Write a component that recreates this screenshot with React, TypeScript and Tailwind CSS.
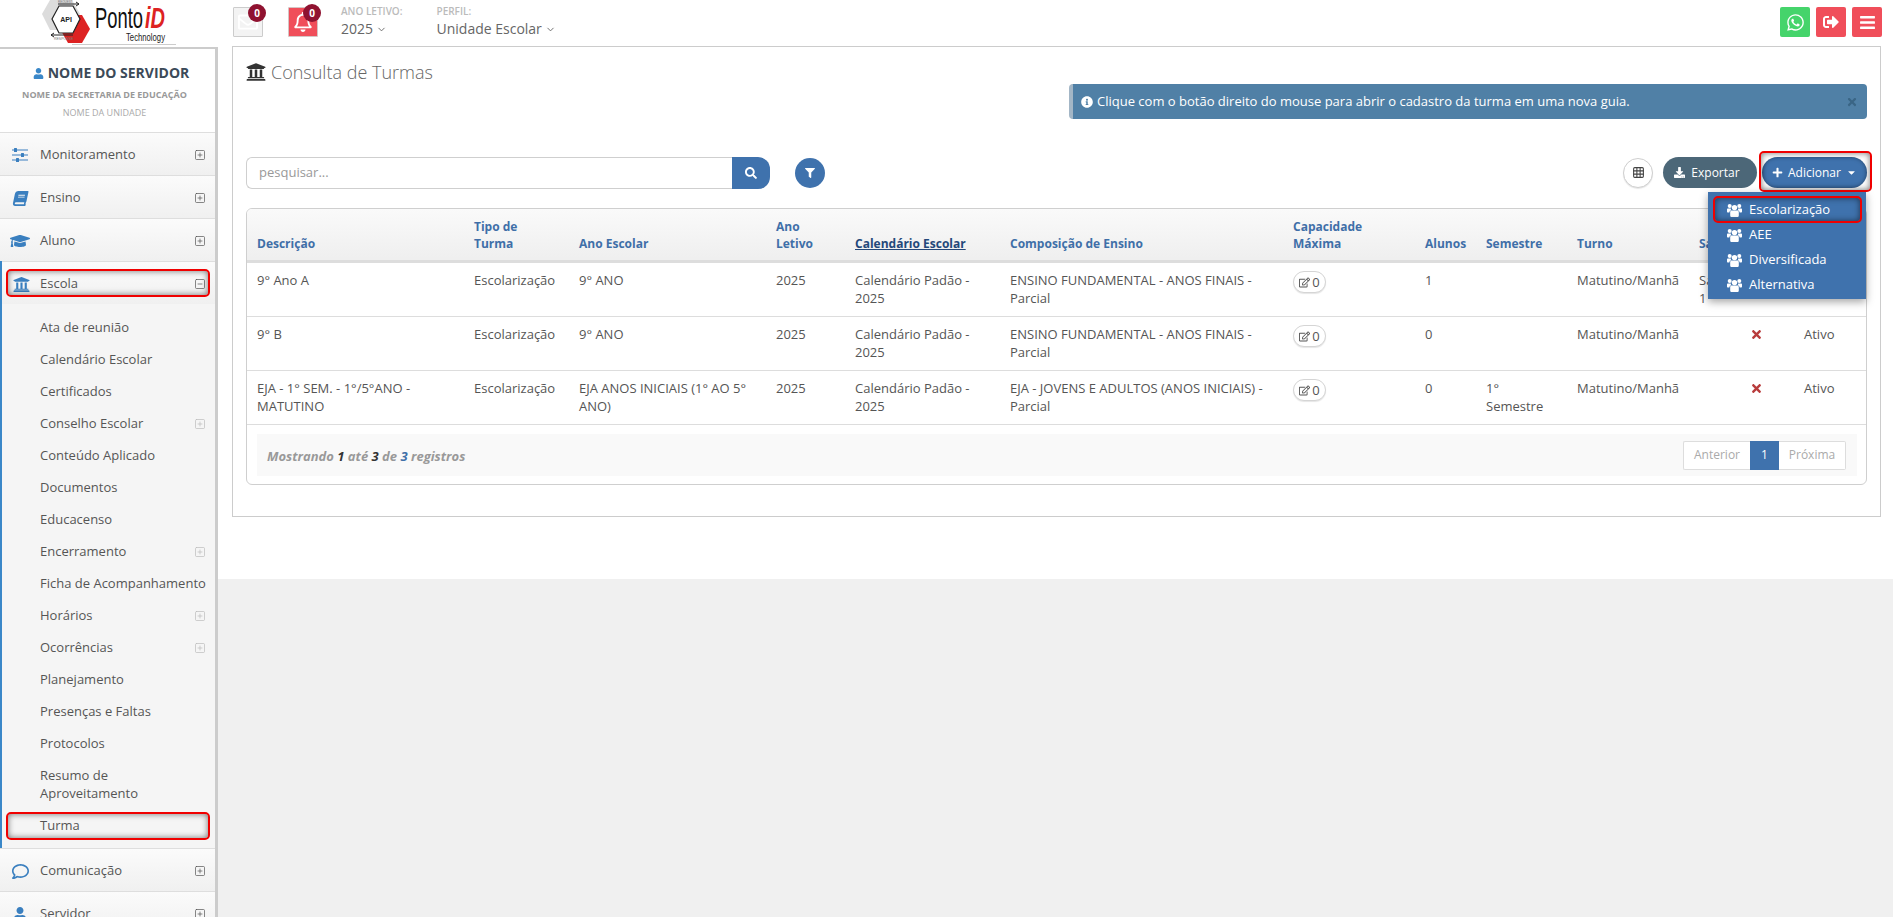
import React from "react";
import {
  FaBars, FaBook, FaCaretDown, FaDownload, FaFilter, FaGraduationCap, FaInfoCircle, FaPlus, FaRegBell,
  FaRegComment, FaRegEdit, FaRegEnvelope, FaSearch, FaSignOutAlt, FaTimes,
  FaUniversity, FaUser, FaWhatsapp,
} from "react-icons/fa";
import { ChevronDown, Grid3x3, SquareMinus, SquarePlus } from "lucide-react";

const font = { fontFamily: '"Open Sans", sans-serif' };

function Logo() {
  return (
    <svg width="218" height="47" viewBox="0 0 218 47" className="block">
      <polygon points="42,14 50,0 72,0 80,14 72,30 50,30" fill="#dcdcdc" />
      <polygon points="60,29 68,15 82,15 90,29 82,43 68,43" fill="#dd2222" />
      <polygon points="52,19 59,6 73,6 80,19 73,33 59,33" fill="#fff" stroke="#222" strokeWidth="1.2" />
      <text x="66" y="22" textAnchor="middle" fontFamily="Liberation Sans" fontWeight="700" fontSize="7" fill="#222">API</text>
      <path d="M58 4h21M76 2l3 2-3 2M73 35H51M54 33l-3 2 3 2" stroke="#222" strokeWidth="1" fill="none" />
      <text x="58" y="2.5" fontFamily="Liberation Sans" fontSize="3" fill="#777">REQUEST</text>
      <text x="54" y="40" fontFamily="Liberation Sans" fontSize="3.5" fill="#777">RESPONSE</text>
      <text x="95" y="28" fontFamily="Liberation Sans" fontSize="29" textLength="48" lengthAdjust="spacingAndGlyphs" fill="#111">Ponto</text>
      <text x="145" y="28" fontFamily="Liberation Sans" fontStyle="italic" fontWeight="700" fontSize="29" textLength="20" lengthAdjust="spacingAndGlyphs" fill="#dd2222">iD</text>
      <text x="126" y="41" fontFamily="Liberation Sans" fontSize="10" textLength="39" lengthAdjust="spacingAndGlyphs" fill="#222">Technology</text>
      <line x1="72" y1="44.5" x2="176" y2="44.5" stroke="#ccc" />
    </svg>
  );
}

function SlidersIcon() {
  return (
    <svg width="16" height="14" viewBox="0 0 16 14" fill="currentColor">
      <rect x="0" y="1.5" width="16" height="1" />
      <rect x="0" y="6.5" width="16" height="1" />
      <rect x="0" y="11.5" width="16" height="1" />
      <rect x="2" y="0" width="3" height="4" rx="0.5" />
      <rect x="9" y="5" width="3" height="4" rx="0.5" />
      <rect x="4" y="10" width="3" height="4" rx="0.5" />
    </svg>
  );
}

function UsersIcon() {
  return (
    <svg width="15" height="14" viewBox="0 0 15 14" fill="currentColor" className="shrink-0">
      <circle cx="7.5" cy="4.6" r="2.7" />
      <path d="M3.2 9c0-1 .7-1.6 1.6-1.6h5.4c.9 0 1.6.6 1.6 1.6v3.4c0 .9-.7 1.6-1.6 1.6H4.8c-.9 0-1.6-.7-1.6-1.6z" />
      <circle cx="2.7" cy="3" r="2" />
      <circle cx="12.3" cy="3" r="2" />
      <path d="M0 6.6c0-.6.4-1 1-1h2.8c-.1.8.2 1.3.6 1.6C3.3 7.4 2.4 8 2.3 9.6H1c-.6 0-1-.4-1-1z" />
      <path d="M15 6.6c0-.6-.4-1-1-1h-2.8c.1.8-.2 1.3-.6 1.6 1.1.2 2 .8 2.1 2.4H14c.6 0 1-.4 1-1z" />
    </svg>
  );
}

function Badge() {
  return (
    <span className="absolute -right-[4px] -top-[4px] flex h-[18px] w-[18px] items-center justify-center rounded-full bg-[#8f1230] text-[10px] font-bold text-white">
      0
    </span>
  );
}

function Header() {
  return (
    <header className="flex h-[47px] shrink-0 items-start bg-white">
      <div className="w-[218px] shrink-0">
        <Logo />
      </div>
      <div className="ml-[15px] mt-[7px] flex">
        <div className="relative flex h-[30px] w-[30px] items-center justify-center rounded-[1px] border border-[#cccccc] bg-[#f3f3f3] text-white">
          <FaRegEnvelope size={20} />
          <Badge />
        </div>
        <div className="relative ml-[25px] flex h-[30px] w-[30px] items-center justify-center rounded-[1px] border border-[#d5c5c5] bg-[#f04e5a] text-white">
          <FaRegBell size={20} />
          <Badge />
        </div>
      </div>
      <div className="ml-[23px] mt-[4px]">
        <div className="text-[10px] font-semibold leading-[14px] text-[#bbb]">ANO LETIVO:</div>
        <div className="mt-px flex items-center gap-[3px] text-[14px] leading-[20px] text-[#666]">
          2025 <ChevronDown size={11} />
        </div>
      </div>
      <div className="ml-[34px] mt-[4px]">
        <div className="text-[10px] font-semibold leading-[14px] text-[#bbb]">PERFIL:</div>
        <div className="mt-px flex items-center gap-[3px] text-[14px] leading-[20px] text-[#666]">
          Unidade Escolar <ChevronDown size={11} />
        </div>
      </div>
      <div className="ml-auto mr-[11px] mt-[7px] flex gap-[6px] text-white">
        <div className="flex h-[30px] w-[30px] items-center justify-center rounded-[2px] bg-[#45d46b]">
          <FaWhatsapp size={19} />
        </div>
        <div className="flex h-[30px] w-[30px] items-center justify-center rounded-[2px] bg-[#f04e5a]">
          <FaSignOutAlt size={16} />
        </div>
        <div className="flex h-[30px] w-[30px] items-center justify-center rounded-[2px] bg-[#f04e5a]">
          <FaBars size={17} />
        </div>
      </div>
    </header>
  );
}

function Highlight({ className }: { className: string }) {
  return (
    <div className={`pointer-events-none absolute rounded-[5px] border-2 border-[#f00000] shadow-[inset_0_0_6px_rgba(0,0,0,0.55)] ${className}`} />
  );
}

function MenuItem({ icon, label }: { icon: React.ReactNode; label: string }) {
  return (
    <div className="relative flex h-[43px] items-center border-t border-[#dedede] bg-gradient-to-b from-[#fbfbfb] to-[#f0f0f0] pt-[2px] text-[13px] text-[#555]">
      <span className="flex w-[40px] shrink-0 justify-center text-[#3a7fbf]">{icon}</span>
      <span className="flex-1">{label}</span>
      <span className="mr-[9px]">
        <SquarePlus size={12} strokeWidth={1.4} />
      </span>
    </div>
  );
}

const subItems: { label: string; more?: boolean }[] = [
  { label: "Ata de reunião" },
  { label: "Calendário Escolar" },
  { label: "Certificados" },
  { label: "Conselho Escolar", more: true },
  { label: "Conteúdo Aplicado" },
  { label: "Documentos" },
  { label: "Educacenso" },
  { label: "Encerramento", more: true },
  { label: "Ficha de Acompanhamento" },
  { label: "Horários", more: true },
  { label: "Ocorrências", more: true },
  { label: "Planejamento" },
  { label: "Presenças e Faltas" },
  { label: "Protocolos" },
];

function Sidebar() {
  return (
    <aside className="w-[218px] shrink-0 border-r-[3px] border-t-2 border-[#cccccc] bg-[#f5f5f5]">
      <div className="h-[83px] bg-white pr-[6px] pt-[14px] text-center">
        <div className="flex items-center justify-center gap-[4px] pl-[13px] text-[14px] font-bold leading-[20px] text-[#3c4a58]">
          <FaUser size={11} className="text-[#3a87c8]" />
          NOME DO SERVIDOR
        </div>
        <div className="mt-[5px] text-[9px] font-bold leading-[14px] text-[#999]">NOME DA SECRETARIA DE EDUCAÇÃO</div>
        <div className="mt-[4px] text-[9px] leading-[14px] text-[#aaa]">NOME DA UNIDADE</div>
      </div>
      <MenuItem icon={<SlidersIcon />} label="Monitoramento" />
      <MenuItem icon={<FaBook size={15} className="-skew-x-12" />} label="Ensino" />
      <MenuItem icon={<FaGraduationCap size={20} />} label="Aluno" />
      <div className="border-l-2 border-[#3a87c8]">
        <div className="relative flex h-[43px] items-center border-t border-[#dedede] bg-gradient-to-b from-[#fbfbfb] to-[#f0f0f0] pt-[2px] text-[13px] text-[#555]">
          <span className="flex w-[38px] shrink-0 justify-center text-[#3a7fbf]">
            <FaUniversity size={17} />
          </span>
          <span className="flex-1">Escola</span>
          <span className="mr-[9px]">
            <SquareMinus size={12} strokeWidth={1.4} />
          </span>
          <Highlight className="left-[4px] right-[5px] top-[7px] h-[28px]" />
        </div>
        <div className="pb-[8px] pt-[8px] text-[13px] text-[#555]">
          {subItems.map((item) => (
            <div key={item.label} className="flex h-[32px] items-center pl-[38px] pr-[9px]">
              <span className="flex-1 whitespace-nowrap">{item.label}</span>
              {item.more && <SquarePlus size={12} strokeWidth={1.4} className="text-[#bbb]" />}
            </div>
          ))}
          <div className="pb-[10px] pl-[38px] pr-[9px] pt-[6px] leading-[18px]">Resumo de<br />Aproveitamento</div>
          <div className="relative flex h-[28px] items-center pl-[38px]">
            Turma
            <Highlight className="left-[4px] right-[5px] top-0 h-[28px]" />
          </div>
        </div>
      </div>
      <MenuItem icon={<FaRegComment size={17} />} label="Comunicação" />
      <MenuItem icon={<FaUser size={14} />} label="Servidor" />
    </aside>
  );
}

interface Row {
  desc: string[];
  ano: string[];
  comp: string[];
  alunos: string;
  semestre: string[];
  sala: string[];
}

const rows: Row[] = [
  { desc: ["9° Ano A"], ano: ["9° ANO"], comp: ["ENSINO FUNDAMENTAL - ANOS FINAIS -", "Parcial"], alunos: "1", semestre: [], sala: ["Sala", "1"] },
  { desc: ["9° B"], ano: ["9° ANO"], comp: ["ENSINO FUNDAMENTAL - ANOS FINAIS -", "Parcial"], alunos: "0", semestre: [], sala: [] },
  { desc: ["EJA - 1° SEM. - 1°/5°ANO -", "MATUTINO"], ano: ["EJA ANOS INICIAIS (1° AO 5°", "ANO)"], comp: ["EJA - JOVENS E ADULTOS (ANOS INICIAIS) -", "Parcial"], alunos: "0", semestre: ["1°", "Semestre"], sala: [] },
];

function Lines({ lines }: { lines: string[] }) {
  return (
    <>
      {lines.map((l) => (
        <div key={l} className="whitespace-nowrap">{l}</div>
      ))}
    </>
  );
}

function Th({ lines, underline }: { lines: string[]; underline?: boolean }) {
  return (
    <th className={`border-b-[3px] border-[#dddddd] px-[10px] pb-[8px] align-bottom text-left text-[12px] font-bold leading-[17px] ${underline ? "text-[#24487a] underline" : "text-[#3f6fa8]"}`}>
      <Lines lines={lines} />
    </th>
  );
}

function TurmasTable() {
  const td = "h-[54px] border-b border-[#dddddd] px-[10px] pt-[8px] align-top";
  return (
    <div className="overflow-hidden rounded-[6px] border border-[#cfcfcf] bg-white">
      <table className="w-full table-fixed border-separate border-spacing-0 text-[13px] leading-[18px] text-[#555]">
        <colgroup>
          <col className="w-[217px]" />
          <col className="w-[105px]" />
          <col className="w-[197px]" />
          <col className="w-[79px]" />
          <col className="w-[155px]" />
          <col className="w-[283px]" />
          <col className="w-[132px]" />
          <col className="w-[61px]" />
          <col className="w-[91px]" />
          <col className="w-[122px]" />
          <col className="w-[53px]" />
          <col className="w-[52px]" />
          <col />
        </colgroup>
        <thead>
          <tr className="h-[54px] bg-gradient-to-b from-[#fafafa] to-[#eeeeee]">
            <Th lines={["Descrição"]} />
            <Th lines={["Tipo de", "Turma"]} />
            <Th lines={["Ano Escolar"]} />
            <Th lines={["Ano", "Letivo"]} />
            <Th lines={["Calendário Escolar"]} underline />
            <Th lines={["Composição de Ensino"]} />
            <Th lines={["Capacidade", "Máxima"]} />
            <Th lines={["Alunos"]} />
            <Th lines={["Semestre"]} />
            <Th lines={["Turno"]} />
            <Th lines={["Sala"]} />
            <Th lines={[""]} />
            <Th lines={["Status"]} />
          </tr>
        </thead>
        <tbody>
          {rows.map((r) => (
            <tr key={r.desc[0]}>
              <td className={td}><Lines lines={r.desc} /></td>
              <td className={td}>Escolarização</td>
              <td className={td}><Lines lines={r.ano} /></td>
              <td className={td}>2025</td>
              <td className={td}><Lines lines={["Calendário Padão -", "2025"]} /></td>
              <td className={td}><Lines lines={r.comp} /></td>
              <td className={td}>
                <span className="inline-flex h-[22px] w-[33px] items-center justify-center gap-[2px] rounded-full border border-[#d5d5d5] bg-white shadow-[0_1px_1px_rgba(0,0,0,0.1)]">
                  <FaRegEdit size={11} />
                  0
                </span>
              </td>
              <td className={td}>{r.alunos}</td>
              <td className={td}><Lines lines={r.semestre} /></td>
              <td className={td}>Matutino/Manhã</td>
              <td className={td}><Lines lines={r.sala} /></td>
              <td className={td}>
                <span className="-ml-[2px] flex h-[18px] items-center text-[#b83c3c]"><FaTimes size={13} /></span>
              </td>
              <td className={td}>Ativo</td>
            </tr>
          ))}
        </tbody>
      </table>
      <div className="mb-[8px] ml-[10px] mr-[9px] mt-[9px] flex h-[42px] items-center justify-between bg-[#f9f9f9] pl-[10px] pr-[11px]">
        <div className="pt-[4px] text-[13px] font-bold italic text-[#999]">
          Mostrando <span className="text-[#333]">1</span> até <span className="text-[#333]">3</span> de <span className="text-[#3f6fa8]">3</span> registros
        </div>
        <div className="flex h-[29px] text-[12px] text-[#aaa]">
          <span className="flex w-[67px] items-center justify-center rounded-l-[2px] border border-r-0 border-[#dddddd] bg-white">Anterior</span>
          <span className="flex w-[29px] items-center justify-center bg-[#3f72ad] text-white">1</span>
          <span className="flex w-[67px] items-center justify-center rounded-r-[2px] border border-l-0 border-[#dddddd] bg-white">Próxima</span>
        </div>
      </div>
    </div>
  );
}

const menuOptions = ["Escolarização", "AEE", "Diversificada", "Alternativa"];

function Toolbar() {
  return (
    <div className="mt-[38px] flex h-[31px] items-center">
      <div className="flex h-[32px] w-[486px] items-center rounded-l-[6px] border border-r-0 border-[#cfcfcf] bg-white pl-[12px] pt-[1px] text-[13px] text-[#999]">
        pesquisar...
      </div>
      <button className="flex h-[32px] w-[38px] items-center justify-center rounded-r-[12px] bg-[#3f72ad] text-white">
        <FaSearch size={12} />
      </button>
      <button className="ml-[25px] flex h-[30px] w-[30px] items-center justify-center rounded-full bg-[#3f72ad] text-white">
        <FaFilter size={10} />
      </button>
      <button className="ml-auto flex h-[30px] w-[30px] items-center justify-center rounded-full border border-[#cfcfcf] bg-white text-[#444] shadow-[0_1px_1px_rgba(0,0,0,0.1)]">
        <Grid3x3 size={13} strokeWidth={2} />
      </button>
      <button className="ml-[10px] flex h-[31px] w-[94px] items-center justify-center gap-[6px] rounded-full bg-[#4c6778] pr-[6px] text-[12px] text-white">
        <FaDownload size={11} />
        Exportar
      </button>
      <div className="relative ml-[5px]">
        <button className="flex h-[31px] w-[105px] items-center gap-[5px] rounded-full bg-[#3f72ad] pl-[10px] text-[12px] text-white shadow-[inset_0_0_4px_rgba(0,0,0,0.35)]">
          <FaPlus size={11} />
          Adicionar
          <FaCaretDown size={11} />
        </button>
        <Highlight className="-bottom-[4px] -left-[3px] -right-[5px] -top-[6px]" />
        <div className="absolute right-[1px] top-[35px] z-10 w-[158px] bg-[#3f72ad] pb-[2px] pt-[5px] text-[13px] text-white shadow-[0_3px_8px_rgba(0,0,0,0.35)]">
          {menuOptions.map((o, i) => (
            <div key={o} className="relative flex h-[25px] items-center gap-[7px] pl-[19px]">
              <UsersIcon />
              {o}
              {i === 0 && <Highlight className="-top-px left-[5px] right-[4px] h-[27px]" />}
            </div>
          ))}
        </div>
      </div>
    </div>
  );
}

function Panel() {
  return (
    <section className="ml-[14px] mr-[12px] border border-[#cccccc] bg-white px-[13px] pb-[31px] pt-[13px]">
      <h1 className="flex h-[24px] items-center gap-[5px] text-[18px] font-light text-[#666]">
        <FaUniversity size={20} className="text-[#333]" />
        Consulta de Turmas
      </h1>
      <div className="flex justify-end">
        <div className="relative flex h-[35px] w-[798px] items-center gap-[4px] rounded-[4px] border-l-4 border-[#a3b6c6] bg-[#5080a6] pl-[8px] text-[13px] text-white">
          <FaInfoCircle size={12} />
          Clique com o botão direito do mouse para abrir o cadastro da turma em uma nova guia.
          <FaTimes size={12} className="absolute right-[9px] text-[#3a6585]" />
        </div>
      </div>
      <Toolbar />
      <div className="mt-[20px]">
        <TurmasTable />
      </div>
    </section>
  );
}

export default function App() {
  return (
    <div className="flex h-screen flex-col overflow-hidden bg-white" style={font}>
      <Header />
      <div className="flex min-h-0 flex-1">
        <Sidebar />
        <main className="-mt-px flex min-w-0 flex-1 flex-col">
          <div className="h-[533px] shrink-0 bg-white">
            <Panel />
          </div>
          <div className="flex-1 bg-[#f0f0f0]" />
        </main>
      </div>
    </div>
  );
}
